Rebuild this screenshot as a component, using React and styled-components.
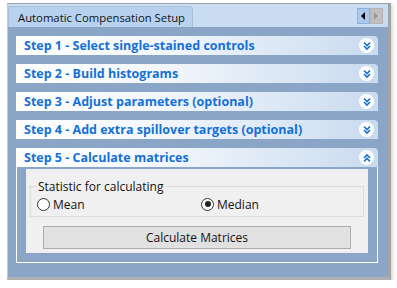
import React from "react";
import styled, { createGlobalStyle } from "styled-components";

const Global = createGlobalStyle`
  html, body { margin: 0; padding: 0; background: #fff; }
  body { font-family: "Open Sans", "Noto Sans", sans-serif; }
`;

const Window = styled.div`
  margin: 3px 0 0 7px;
  width: 380px;
  border-top: 1px solid #a0a0a0;
  border-left: 1px solid #c8c8c8;
  border-right: 3px solid #a3a3a3;
  border-bottom: 3px solid #b0b0b0;
  box-shadow: 2px 2px 3px rgba(0,0,0,0.15);
`;

const TabStrip = styled.div`
  height: 23px;
  background: #c9dcf1;
  display: flex;
  align-items: flex-end;
  justify-content: space-between;
  padding-right: 5px;
`;

const Tab = styled.div`
  height: 21px;
  width: 185px;
  flex-shrink: 0;
  box-sizing: border-box;
  padding: 0 9px;
  display: flex;
  align-items: center;
  white-space: nowrap;
  background: #b7d1ee;
  border: 1px solid #a8bfdc;
  border-bottom: none;
  border-radius: 0 4px 0 0;
  font-size: 11.3px;
  color: #111;
`;

const Scroller = styled.div`
  display: flex;
  align-self: center;
  height: 16px;
`;

const ScrollBtn = styled.div`
  width: 13px;
  height: 16px;
  display: flex;
  align-items: center;
  justify-content: center;
  background: ${p => (p.active ? "#a9c9ee" : "#c0c0c0")};
  border: 1px solid ${p => (p.active ? "#8fb1dc" : "#b4b4b4")};
  box-sizing: border-box;
`;

const Panel = styled.div`
  background: #8aa5c5;
  padding: 9px 10px 14px 8px;
  display: flex;
  flex-direction: column;
  gap: 9px;
`;

const Header = styled.div`
  height: 19px;
  display: flex;
  align-items: center;
  justify-content: space-between;
  padding: 0 4px 0 8px;
  border-radius: 0 4px 0 0;
  background: linear-gradient(to right, #ffffff 0%, #f3f7fc 40%, #c9dbef 100%);
  font-weight: 700;
  font-size: 12.5px;
  color: #1470d8;
`;

const Chevron = styled.div`
  width: 15px;
  height: 15px;
  border-radius: 50%;
  background: #fff;
  display: flex;
  align-items: center;
  justify-content: center;
`;

const Section = styled.div`
  display: flex;
  flex-direction: column;
`;

const Body = styled.div`
  border: 1px solid #fff;
  border-top: none;
  padding: 2px 9px 9px 9px;
`;

const Content = styled.div`
  background: #f0f0f0;
  padding: 9px 4px 4px 4px;
  display: flex;
  flex-direction: column;
  align-items: center;
  gap: 9px;
`;

const Group = styled.fieldset`
  align-self: stretch;
  margin: 0;
  padding: 0 6px 3px 6px;
  border: 1px solid #dcdcdc;
  display: grid;
  grid-template-columns: 164px 1fr;
  font-size: 12px;
  color: #111;
`;

const Legend = styled.legend`
  padding: 0 1px;
  font-size: 12px;
  color: #111;
`;

const Radio = styled.label`
  display: flex;
  align-items: center;
  gap: 3px;
  height: 18px;
`;

const Dot = styled.span`
  width: 11px;
  height: 11px;
  border-radius: 50%;
  border: 1px solid #333;
  background: #fff;
  display: flex;
  align-items: center;
  justify-content: center;
  &::after {
    content: "";
    width: 6px;
    height: 6px;
    border-radius: 50%;
    background: ${p => (p.checked ? "#222" : "transparent")};
  }
`;

const Button = styled.button`
  width: 308px;
  height: 23px;
  background: #e1e1e1;
  border: 1px solid #adadad;
  font-family: inherit;
  font-size: 12px;
  color: #111;
`;

const ChevronIcon = ({ up }) => (
  <svg width="10" height="10" viewBox="0 0 10 10">
    <g fill="none" stroke="#1470d8" strokeWidth="1.6" transform={up ? "rotate(180 5 5)" : undefined}>
      <path d="M2 1.5 L5 4.5 L8 1.5" />
      <path d="M2 5 L5 8 L8 5" />
    </g>
  </svg>
);

const steps = [
  "Step 1 - Select single-stained controls",
  "Step 2 - Build histograms",
  "Step 3 - Adjust parameters (optional)",
  "Step 4 - Add extra spillover targets (optional)",
];

export default function App() {
  return (
    <>
      <Global />
      <Window>
        <TabStrip>
          <Tab>Automatic Compensation Setup</Tab>
          <Scroller>
            <ScrollBtn active>
              <svg width="5" height="8" viewBox="0 0 5 8"><path d="M4 0 L0 4 L4 8 Z" fill="#000" /></svg>
            </ScrollBtn>
            <ScrollBtn>
              <svg width="5" height="8" viewBox="0 0 5 8"><path d="M0 0 L4 4 L0 8 Z" fill="#9a9a9a" /></svg>
            </ScrollBtn>
          </Scroller>
        </TabStrip>
        <Panel>
          {steps.map(s => (
            <Header key={s}>
              {s}
              <Chevron><ChevronIcon /></Chevron>
            </Header>
          ))}
          <Section>
            <Header>
              Step 5 - Calculate matrices
              <Chevron><ChevronIcon up /></Chevron>
            </Header>
            <Body>
              <Content>
                <Group>
                  <Legend>Statistic for calculating</Legend>
                  <Radio><Dot />Mean</Radio>
                  <Radio><Dot checked />Median</Radio>
                </Group>
                <Button>Calculate Matrices</Button>
              </Content>
            </Body>
          </Section>
        </Panel>
      </Window>
    </>
  );
}
